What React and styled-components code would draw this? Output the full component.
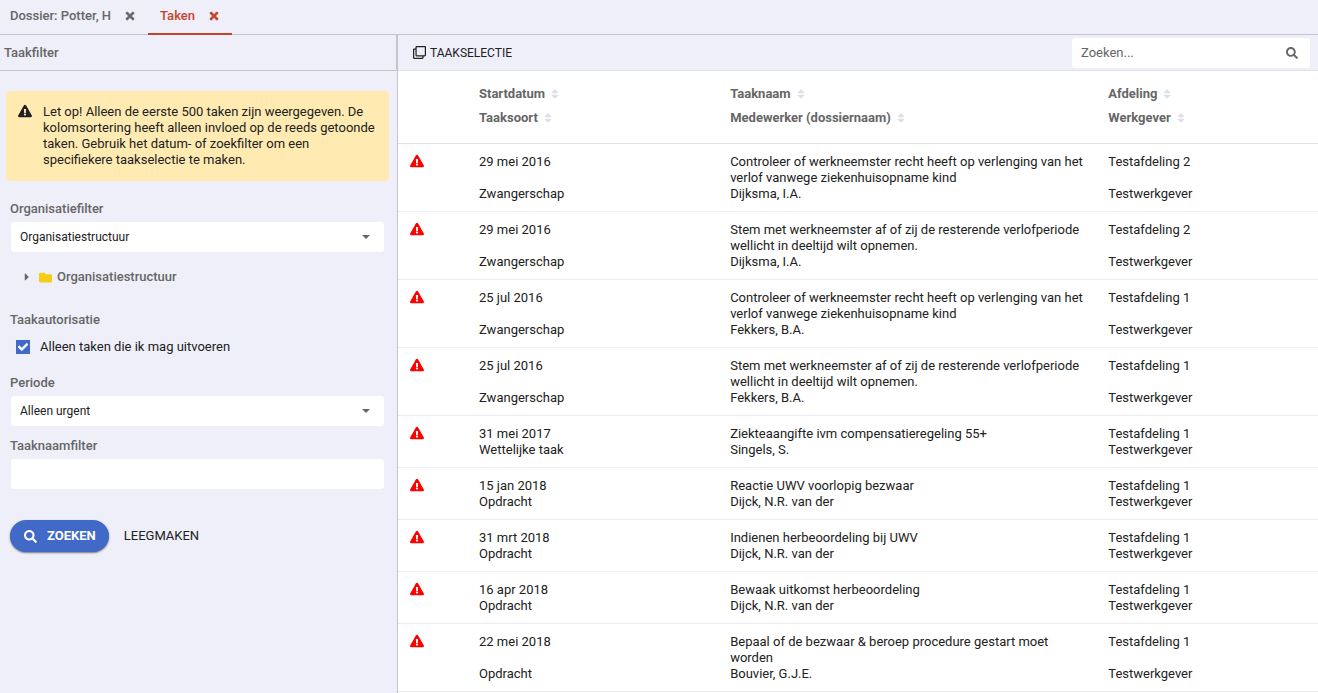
import React from 'react';
import styled, { createGlobalStyle, css } from 'styled-components';
import {
  FaCaretRight,
  FaCheck,
  FaExclamationTriangle,
  FaFolder,
  FaRegClone,
  FaSearch,
  FaSort,
  FaTimes,
} from 'react-icons/fa';

const color = {
  surface: '#efeff9',
  line: '#c4c4d0',
  lineSoft: '#e0e0ea',
  lineRow: '#ececf5',
  text: '#212121',
  muted: '#666666',
  primary: '#4169c8',
  active: '#c5432a',
  notice: '#ffebb2',
  alert: '#ff0000',
  folder: '#f5cd19',
};

const GlobalStyle = createGlobalStyle`
  *, *::before, *::after { box-sizing: border-box; }
  body {
    margin: 0;
    background: ${color.surface};
    color: ${color.text};
    font-family: Roboto, "Liberation Sans", sans-serif;
    font-size: 13px;
    line-height: 16px;
  }
  button, input, select { font: inherit; color: inherit; }
`;

const Page = styled.div`
  display: flex;
  flex-direction: column;
  min-height: 100vh;
`;

const TabBar = styled.nav`
  display: flex;
  height: 35px;
  border-bottom: 1px solid ${color.line};
`;

const Tab = styled.div`
  display: flex;
  gap: 13px;
  height: 35px;
  padding: 0 12px 3px 10px;
  align-items: center;
  color: ${color.muted};
  ${({ $active }) =>
    $active &&
    css`
      color: ${color.active};
      border-bottom: 2px solid ${color.active};
      padding: 0 12px 1px 12px;
    `}
`;

const TabLink = styled.a`
  color: inherit;
  font-weight: 500;
  text-decoration: none;
`;

const IconButton = styled.button`
  display: flex;
  padding: 0;
  border: 0;
  background: none;
  color: inherit;
  cursor: pointer;
`;

const Cross = styled(FaTimes)`
  stroke: currentColor;
  stroke-width: 20px;
`;

const Columns = styled.div`
  display: flex;
  flex: 1;
`;

const Sidebar = styled.aside`
  flex: 0 0 397px;
`;

const SidebarTitle = styled.h1`
  display: flex;
  align-items: center;
  height: 36px;
  margin: 0;
  padding: 0 4px;
  border-right: 1px solid ${color.line};
  border-bottom: 1px solid ${color.line};
  color: ${color.muted};
  font-size: 13px;
  font-weight: 500;
`;

const Notice = styled.div`
  display: flex;
  gap: 11px;
  margin: 20px 8px 20px 6px;
  padding: 13px 12px;
  border-radius: 4px;
  background: ${color.notice};

  svg { flex: none; }
  p { margin: 0; }
`;

const Filters = styled.form`
  padding: 0 13px 0 10px;
`;

const Label = styled.label`
  display: block;
  color: ${color.muted};
  font-weight: 500;
`;

const Field = styled.div`
  margin-bottom: 12px;

  select, input { margin: 5px 0 0 1px; }
`;

const boxStyle = css`
  display: block;
  width: calc(100% - 1px);
  height: 30px;
  padding: 0 9px;
  border: 0;
  border-radius: 3px;
  background-color: #fff;
`;

const TextInput = styled.input`
  ${boxStyle}
`;

const SelectWrap = styled.div`
  position: relative;

  &::after {
    content: '';
    position: absolute;
    right: 14px;
    bottom: 13px;
    border: 4px solid transparent;
    border-top-color: ${color.muted};
    border-bottom: 0;
    pointer-events: none;
  }
`;

const Select = styled.select`
  ${boxStyle}
  appearance: none;
  font-size: 12px;
`;

const Tree = styled.ul`
  margin: 0 0 27px;
  padding: 5px 0 0 11px;
  list-style: none;
`;

const TreeItem = styled.li`
  display: flex;
  align-items: center;
  color: ${color.muted};
  font-weight: 500;

  span { margin-left: 5px; }
`;

const Folder = styled(FaFolder)`
  margin-left: 6px;
  color: ${color.folder};
`;

const Group = styled.fieldset`
  margin: 0 0 20px;
  padding: 0;
  border: 0;

  legend {
    padding: 0;
    color: ${color.muted};
    font-weight: 500;
  }
`;

const CheckRow = styled.label`
  display: flex;
  align-items: center;
  gap: 10px;
  margin-top: 11px;
  padding-left: 6px;
`;

const CheckBox = styled.span`
  display: grid;
  width: 14px;
  height: 14px;
  background: ${color.primary};
  color: #fff;

  > * { grid-area: 1 / 1; place-self: center; }
  input {
    appearance: none;
    width: 14px;
    height: 14px;
    margin: 0;
  }
  svg {
    pointer-events: none;
    stroke: currentColor;
    stroke-width: 30px;
  }
  input:not(:checked) + svg { visibility: hidden; }
`;

const Actions = styled.div`
  display: flex;
  align-items: center;
  gap: 15px;
  margin-top: 31px;
`;

const PrimaryButton = styled.button`
  display: flex;
  align-items: center;
  gap: 10px;
  height: 32px;
  padding: 0 13px 0 14px;
  border: 0;
  border-radius: 16px;
  background: ${color.primary};
  box-shadow: 0 1px 2px rgba(0, 0, 0, 0.5);
  color: #fff;
  font-weight: 700;
  text-transform: uppercase;
`;

const TextButton = styled.button`
  display: flex;
  align-items: center;
  gap: 4px;
  padding: 0;
  border: 0;
  background: none;
  text-transform: uppercase;
`;

const ToolButton = styled(TextButton)`
  font-size: 12px;
`;

const Main = styled.main`
  flex: 1;
  min-width: 0;
  border-left: 1px solid ${color.line};
  background: #fff;
`;

const Toolbar = styled.div`
  display: flex;
  align-items: center;
  justify-content: space-between;
  height: 36px;
  padding: 0 8px 0 15px;
  border-bottom: 1px solid ${color.lineSoft};
  background: ${color.surface};
`;

const SearchBox = styled.div`
  display: flex;
  align-items: center;
  width: 238px;
  height: 30px;
  padding: 0 12px 0 9px;
  border-radius: 3px;
  background: #fff;
  color: ${color.muted};

  input {
    flex: 1;
    min-width: 0;
    padding: 0;
    border: 0;
    background: none;
    outline: none;
  }
  input::placeholder { color: ${color.muted}; opacity: 1; }
`;

const Table = styled.table`
  width: 100%;
  table-layout: fixed;
  border-collapse: separate;
  border-spacing: 0;

  th, td {
    padding: 0 12px;
    text-align: left;
    vertical-align: top;
  }
`;

const Head = styled.thead`
  th {
    color: ${color.muted};
    font-weight: 700;
    line-height: 24px;
  }
  tr:first-child th { padding-top: 11px; height: 35px; }
  tr:last-child th { height: 38px; }
  tr:last-child th, th[rowspan] { border-bottom: 1px solid ${color.lineSoft}; }
`;

const SortButton = styled.button`
  display: inline-flex;
  align-items: center;
  gap: 4px;
  padding: 0;
  border: 0;
  background: none;
  font-weight: 700;

  svg { color: ${color.lineSoft}; }
`;

const Record = styled.tbody`
  tr:first-child td { padding-top: 10px; }
  tr:last-child td { padding-bottom: 9px; }
  tr:last-child td, td[rowspan] { border-bottom: 1px solid ${color.lineRow}; }
`;

const AlertIcon = styled(FaExclamationTriangle)`
  display: block;
  color: ${color.alert};
`;

const headings = [
  ['Startdatum', 'Taaknaam', 'Afdeling'],
  ['Taaksoort', 'Medewerker (dossiernaam)', 'Werkgever'],
];

const extend =
  'Controleer of werkneemster recht heeft op verlenging van het verlof vanwege ziekenhuisopname kind';
const partTime =
  'Stem met werkneemster af of zij de resterende verlofperiode wellicht in deeltijd wilt opnemen.';

const tasks = [
  ['29 mei 2016', 'Zwangerschap', extend, 'Dijksma, I.A.', 'Testafdeling 2'],
  ['29 mei 2016', 'Zwangerschap', partTime, 'Dijksma, I.A.', 'Testafdeling 2'],
  ['25 jul 2016', 'Zwangerschap', extend, 'Fekkers, B.A.', 'Testafdeling 1'],
  ['25 jul 2016', 'Zwangerschap', partTime, 'Fekkers, B.A.', 'Testafdeling 1'],
  ['31 mei 2017', 'Wettelijke taak', 'Ziekteaangifte ivm compensatieregeling 55+', 'Singels, S.', 'Testafdeling 1'],
  ['15 jan 2018', 'Opdracht', 'Reactie UWV voorlopig bezwaar', 'Dijck, N.R. van der', 'Testafdeling 1'],
  ['31 mrt 2018', 'Opdracht', 'Indienen herbeoordeling bij UWV', 'Dijck, N.R. van der', 'Testafdeling 1'],
  ['16 apr 2018', 'Opdracht', 'Bewaak uitkomst herbeoordeling', 'Dijck, N.R. van der', 'Testafdeling 1'],
  ['22 mei 2018', 'Opdracht', 'Bepaal of de bezwaar & beroep procedure gestart moet worden', 'Bouvier, G.J.E.', 'Testafdeling 1'],
];

function SelectField({ id, label, value }) {
  return (
    <Field>
      <Label htmlFor={id}>{label}</Label>
      <SelectWrap>
        <Select id={id} defaultValue={value}>
          <option>{value}</option>
        </Select>
      </SelectWrap>
    </Field>
  );
}

function TabItem({ label, active }) {
  return (
    <Tab $active={active}>
      <TabLink href="#">{label}</TabLink>
      <IconButton type="button" aria-label={`${label} sluiten`}>
        <Cross size={12} />
      </IconButton>
    </Tab>
  );
}

export default function App() {
  return (
    <Page>
      <GlobalStyle />
      <TabBar>
        <TabItem label="Dossier: Potter, H" />
        <TabItem label="Taken" active />
      </TabBar>
      <Columns>
        <Sidebar>
          <SidebarTitle>Taakfilter</SidebarTitle>
          <Notice>
            <FaExclamationTriangle size={14} />
            <p>
              Let op! Alleen de eerste 500 taken zijn weergegeven. De kolomsortering heeft alleen
              invloed op de reeds getoonde taken. Gebruik het datum- of zoekfilter om een
              specifiekere taakselectie te maken.
            </p>
          </Notice>
          <Filters onSubmit={(e) => e.preventDefault()}>
            <SelectField id="org" label="Organisatiefilter" value="Organisatiestructuur" />
            <Tree>
              <TreeItem>
                <IconButton type="button" aria-label="Uitklappen">
                  <FaCaretRight size={12} color={color.muted} />
                </IconButton>
                <Folder size={13} />
                <span>Organisatiestructuur</span>
              </TreeItem>
            </Tree>
            <Group>
              <legend>Taakautorisatie</legend>
              <CheckRow>
                <CheckBox>
                  <input type="checkbox" defaultChecked />
                  <FaCheck size={10} />
                </CheckBox>
                Alleen taken die ik mag uitvoeren
              </CheckRow>
            </Group>
            <SelectField id="periode" label="Periode" value="Alleen urgent" />
            <Field>
              <Label htmlFor="naam">Taaknaamfilter</Label>
              <TextInput id="naam" type="text" />
            </Field>
            <Actions>
              <PrimaryButton type="submit">
                <FaSearch size={13} />
                Zoeken
              </PrimaryButton>
              <TextButton type="reset">Leegmaken</TextButton>
            </Actions>
          </Filters>
        </Sidebar>
        <Main>
          <Toolbar>
            <ToolButton type="button">
              <FaRegClone size={13} />
              Taakselectie
            </ToolButton>
            <SearchBox>
              <input type="search" placeholder="Zoeken..." aria-label="Zoeken" />
              <FaSearch size={12} />
            </SearchBox>
          </Toolbar>
          <Table>
            <colgroup>
              <col style={{ width: 69 }} />
              <col style={{ width: '27.3%' }} />
              <col style={{ width: '41.1%' }} />
              <col />
            </colgroup>
            <Head>
              {headings.map((row, i) => (
                <tr key={row[0]}>
                  {i === 0 && <th rowSpan={2} aria-label="Status" />}
                  {row.map((name) => (
                    <th key={name} scope="col">
                      <SortButton type="button">
                        {name}
                        <FaSort size={12} />
                      </SortButton>
                    </th>
                  ))}
                </tr>
              ))}
            </Head>
            {tasks.map(([date, kind, name, person, department], i) => (
              <Record key={i}>
                <tr>
                  <td rowSpan={2}>
                    <AlertIcon size={14} title="Urgent" />
                  </td>
                  <td>{date}</td>
                  <td>{name}</td>
                  <td>{department}</td>
                </tr>
                <tr>
                  <td>{kind}</td>
                  <td>{person}</td>
                  <td>Testwerkgever</td>
                </tr>
              </Record>
            ))}
          </Table>
        </Main>
      </Columns>
    </Page>
  );
}
